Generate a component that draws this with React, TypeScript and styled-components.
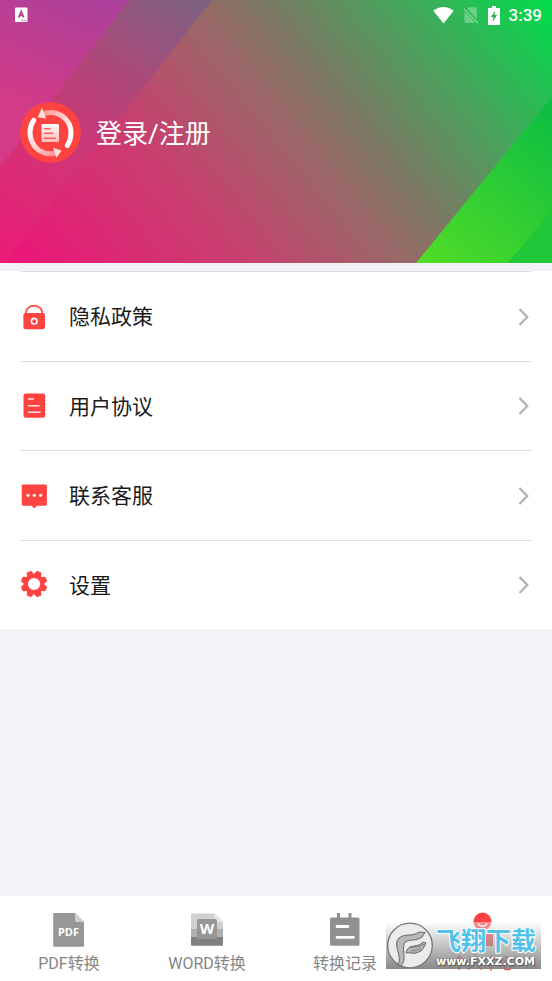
import React from "react";
import styled, { createGlobalStyle } from "styled-components";

const GlobalStyle = createGlobalStyle`
  * { box-sizing: border-box; }
  body {
    margin: 0;
    background: #f2f3f7;
    font-family: Roboto, "Noto Sans CJK SC", sans-serif;
    color: #1a1a1a;
  }
  button { border: 0; padding: 0; background: none; font: inherit; color: inherit; cursor: pointer; }
  svg { display: block; flex: none; }
`;

const Page = styled.div`
  position: relative;
  display: flex;
  flex-direction: column;
  min-height: 100vh;
`;

const Header = styled.header`
  position: relative;
  isolation: isolate;
  overflow: hidden;
  padding-bottom: 100px;
  color: #fff;
  background: linear-gradient(51deg, #ee1279 0%, #c8406f 32%, #9b6768 52%, #7b7863 62%, #48a45c 79%, #00dc4a 100%);
`;

const HeaderArt = styled.svg`
  position: absolute;
  inset: 0;
  z-index: -1;
  width: 100%;
  height: 100%;
`;

const StatusBar = styled.div`
  display: flex;
  align-items: center;
  justify-content: space-between;
  height: 30px;
  padding: 0 10px 0 14px;
`;

const StatusIcons = styled.div`
  display: flex;
  align-items: center;
  gap: 9px;
`;

const Clock = styled.time`
  font-size: 17px;
  line-height: 20px;
  font-weight: 500;
`;

const Profile = styled.button`
  display: flex;
  align-items: center;
  gap: 15px;
  margin: 72px 0 0 20px;
  font-size: 26px;
  line-height: 38px;
`;

const ProfileName = styled.span`
  padding-top: 2px;
`;

const Menu = styled.nav`
  display: grid;
  grid-auto-rows: 1fr;
  min-height: 358px;
  margin-top: 8px;
  padding: 0 20px;
  background: #fff;
`;

const MenuRow = styled.button`
  display: flex;
  align-items: center;
  gap: 21px;
  padding-top: 1px;
  border-top: 1px solid #dfdfe0;
  font-size: 21px;
  line-height: 30px;
  text-align: left;
`;

const MenuLabel = styled.span`
  flex: 1;
  padding-top: 1px;
`;

const TabBar = styled.nav`
  display: grid;
  grid-template-columns: repeat(4, 1fr);
  margin-top: auto;
  padding: 16px 0 5px;
  background: #fff;
`;

const Tab = styled.button<{ $active?: boolean }>`
  display: flex;
  flex-direction: column;
  align-items: center;
  gap: 4px;
  font-size: 16px;
  line-height: 24px;
  color: ${(p) => (p.$active ? "#fb4141" : "#858585")};
`;

const Watermark = styled.div`
  position: absolute;
  right: 11px;
  bottom: 12px;
  display: flex;
  align-items: center;
  gap: 2px;
  width: 155px;
  height: 47px;
  background: linear-gradient(rgba(255, 255, 255, 0.4), rgba(120, 120, 120, 0.88));
  pointer-events: none;
`;

const MarkText = styled.div`
  display: flex;
  flex-direction: column;
  align-items: flex-start;
  white-space: nowrap;
`;

const MarkName = styled.span`
  font: 700 25px/32px "Noto Sans CJK SC", sans-serif;
  color: #50c2ea;
  -webkit-text-stroke: 2px #fff;
  paint-order: stroke fill;
`;

const MarkUrl = styled.span`
  font: bold 11px/14px "DejaVu Sans", sans-serif;
  color: #fff;
  text-shadow: 1px 1px 1px #555, -1px 0 1px #666;
`;

const AppBadge = () => (
  <svg width="16" height="16" viewBox="0 0 16 16" aria-hidden="true">
    <rect x="1" y="0.5" width="12.5" height="14.5" rx="1" fill="#fff" />
    <path d="M4.7 10.5 7.2 4.5l2.5 6M5.500 8.500h3.400" fill="none" stroke="#b0408c" strokeWidth="1.7" />
    <path d="M7 13.300h5.500" stroke="#d193bb" />
  </svg>
);

const Wifi = () => (
  <svg width="21" height="18" viewBox="0 0 21 18" aria-hidden="true">
    <path d="M.3 4.800C6-.4 15-.4 20.700 4.800L10.500 17.500Z" fill="#fff" />
  </svg>
);

const NoSim = () => (
  <svg width="16" height="18" viewBox="0 0 16 18" aria-hidden="true">
    <path d="M5.500 1.200h7c.8 0 1.300.5 1.300 1.300v11L4.300 2.400ZM1.500 5.200l10.800 11.600H2.800c-.8 0-1.300-.5-1.300-1.300Z" fill="#fff" opacity=".32" />
    <path d="m.7 2.400 14 14.800" stroke="#fff" opacity=".45" strokeWidth="1.2" />
  </svg>
);

const Battery = () => (
  <svg width="12" height="19" viewBox="0 0 12 19" aria-hidden="true">
    <path d="M4 0h4v2h4v17H0V2h4Z" fill="#fff" />
    <path d="M7.200 5 2.800 11h2.600L4.500 16l4.700-7H6.600Z" fill="#2fae55" />
  </svg>
);

const Logo = () => (
  <svg width="61" height="61" viewBox="0 0 61 61" aria-hidden="true">
    <defs>
      <linearGradient id="arcRight" x1="0" y1="0" x2="1" y2="1">
        <stop offset="0" stopColor="#ff9a98" />
        <stop offset=".8" stopColor="#fff" />
      </linearGradient>
      <linearGradient id="arcLeft" x1="0" y1="0" x2="1" y2="1">
        <stop offset=".1" stopColor="#fff" />
        <stop offset="1" stopColor="#ff9a98" />
      </linearGradient>
      <linearGradient id="sheet" x1="0" y1="0" x2="0" y2="1">
        <stop offset="0" stopColor="#fff" />
        <stop offset="1" stopColor="#ffbab8" />
      </linearGradient>
    </defs>
    <circle cx="30.5" cy="30.5" r="30.3" fill="#ff4341" />
    <path d="M24.500 11.200C39 7.500 51 18 51 31c0 5-1.400 9-3.700 12.400" fill="none" stroke="url(#arcRight)" strokeWidth="5" strokeLinecap="round" />
    <path d="M13.700 18.400C4.500 31.500 13 54 34 51.500" fill="none" stroke="url(#arcLeft)" strokeWidth="5" strokeLinecap="round" />
    <path d="m22 6 4.300 10.500-8.800-1.300Z" fill="#ffe0df" />
    <path d="m33 45.500 8.500 3.200-5.200 7.300Z" fill="#ffe0df" />
    <rect x="21.5" y="22" width="17.5" height="18" rx="1" fill="url(#sheet)" />
    <path d="M24 26.700h6.500M24 31.300h9.500M24 36.200h12" stroke="#ff5a58" strokeWidth="1.5" />
  </svg>
);

const Lock = () => (
  <svg width="28" height="28" viewBox="0 0 28 28" aria-hidden="true">
    <path d="M6 12.500V9.800C6 5.500 9.500 2.800 14 2.800s8.200 2.700 8.200 7v2.700" fill="none" stroke="#ff5a58" strokeWidth="2" />
    <rect x="3.4" y="10" width="21.6" height="16.2" rx="2.2" fill="#ff4341" />
    <circle cx="14.2" cy="18.2" r="2.8" fill="none" stroke="#fff" strokeWidth="1.6" />
  </svg>
);

const Sheet = () => (
  <svg width="28" height="28" viewBox="0 0 28 28" aria-hidden="true">
    <rect x="3.5" y="1.5" width="21.7" height="24.2" rx="2.5" fill="#ff4341" />
    <path d="M8 7h6M8 13.700h11.500M8 20.300h12.500" stroke="#ffe4e3" strokeWidth="1.5" />
  </svg>
);

const Chat = () => (
  <svg width="28" height="28" viewBox="0 0 28 28" aria-hidden="true">
    <path d="M3.300 2.500h22c.9 0 1.600.7 1.600 1.600v18c0 .9-.7 1.600-1.600 1.600h-8.400L14.300 26.500l-2.600-2.800H3.300c-.9 0-1.600-.7-1.600-1.600v-18c0-.9.7-1.600 1.600-1.600Z" fill="#ff4341" />
    <g fill="#fff">
      <circle cx="8" cy="13.3" r="1.6" />
      <circle cx="14.3" cy="13.3" r="1.6" />
      <circle cx="20.6" cy="13.3" r="1.6" />
    </g>
  </svg>
);

const Gear = () => (
  <svg width="28" height="28" viewBox="-14 -13 28 28" aria-hidden="true">
    <g fill="#ff4341">
      {[22.5, 67.5, 112.5, 157.5, 202.5, 247.5, 292.5, 337.5].map((a) => (
        <path key={a} d="M-4-8-2.800-12.400Q-2.500-13.300-1.600-13.300H1.600Q2.500-13.300 2.800-12.400L4-8Z" transform={`rotate(${a})`} />
      ))}
    </g>
    <circle r="8.2" fill="none" stroke="#ff4341" strokeWidth="4.2" />
  </svg>
);

const Chevron = () => (
  <svg width="14" height="20" viewBox="0 0 14 20" aria-hidden="true">
    <path d="m1.500 2 7.800 8-7.800 8" fill="none" stroke="#b2b2b2" strokeWidth="2.3" />
  </svg>
);

const PdfIcon = () => (
  <svg width="36" height="36" viewBox="0 0 36 36" aria-hidden="true">
    <path d="M3.500 1H24l9 9v23.500c0 .8-.5 1.300-1.300 1.300H3.500c-.8 0-1.300-.5-1.300-1.300V2.300C2.200 1.500 2.700 1 3.500 1Z" fill="#979797" />
    <path d="m24 1 9 9h-7.500c-.9 0-1.500-.6-1.500-1.500Z" fill="#cfcfcf" />
    <text x="17.5" y="24" textAnchor="middle" fill="#fff" fontFamily="Open Sans" fontWeight="700" fontSize="11">PDF</text>
  </svg>
);

const WordIcon = () => (
  <svg width="36" height="36" viewBox="0 0 36 36" aria-hidden="true">
    <path d="M2 1.500h23.500l8.500 8.500v8H2Z" fill="#d0d0d0" />
    <path d="m25.500 1.500 8.500 8.500h-8.500Z" fill="#e7e7e7" />
    <path d="M2 17h32v8.500H2Z" fill="#b0b0b0" />
    <path d="M2 25h32v7.500c0 .8-.5 1.300-1.300 1.300H3.300c-.8 0-1.300-.5-1.300-1.300Z" fill="#808080" />
    <rect x="8" y="7" width="20" height="20" rx="1.5" fill="#969696" />
    <text x="18" y="22" textAnchor="middle" fill="#fff" fontFamily="Open Sans" fontWeight="700" fontSize="15">W</text>
  </svg>
);

const RecordIcon = () => (
  <svg width="36" height="36" viewBox="0 0 36 36" aria-hidden="true">
    <path d="M11.500 1v6M23 1v6" stroke="#909090" strokeWidth="3" />
    <rect x="3" y="5.5" width="29.5" height="28.3" rx="1.5" fill="#909090" />
    <path d="M10 14.500h11M10 25.300h16.500" stroke="#fff" strokeWidth="2.8" strokeLinecap="round" />
  </svg>
);

const PersonIcon = () => (
  <svg width="36" height="36" viewBox="0 0 36 36" aria-hidden="true">
    <circle cx="17.5" cy="9.5" r="9" fill="#fb4141" />
    <path d="M13 11.500c2 3.600 7 3.600 9 0" fill="none" stroke="#fff" strokeWidth="1.5" />
    <path d="M13 18.500h11q4 0 4 4V34H9V22.500q0-4 4-4Z" fill="#fb4141" />
  </svg>
);

const WatermarkLogo = () => (
  <svg width="48" height="47" viewBox="0 0 48 47" aria-hidden="true">
    <circle cx="24" cy="23.5" r="22.3" fill="#ececec" stroke="#777" strokeWidth="1.3" />
    <path d="M12 43C17 34 6 23 13 16c6-5 14-1 20-6l6 .5-3 4.500c-6 5-15 1-18 7-2 7 3 15-3 22Z" fill="#b8b8b8" stroke="#666" />
    <path d="M21 28c3-6 11-2 16-8l3 1-2 4-3 4-5 2c-4 1-7-1-10 0Z" fill="#b8b8b8" stroke="#666" />
    <path d="M24 26c4-2 9 0 14-4M25 29c4-1 6 0 10-3" fill="none" stroke="#666" strokeWidth=".8" />
  </svg>
);

const menuItems = [
  { label: "隐私政策", Icon: Lock },
  { label: "用户协议", Icon: Sheet },
  { label: "联系客服", Icon: Chat },
  { label: "设置", Icon: Gear },
];

const tabs = [
  { label: "PDF转换", Icon: PdfIcon },
  { label: "WORD转换", Icon: WordIcon },
  { label: "转换记录", Icon: RecordIcon },
  { label: "个人中心", Icon: PersonIcon, active: true },
];

export default function App() {
  return (
    <Page>
      <GlobalStyle />
      <Header>
        <HeaderArt viewBox="0 0 552 263" preserveAspectRatio="none" aria-hidden="true">
          <defs>
            <linearGradient id="violet" gradientUnits="userSpaceOnUse" x1="130" y1="0" x2="10" y2="263">
              <stop offset="0" stopColor="#a8409c" />
              <stop offset=".5" stopColor="#d43b86" />
              <stop offset="1" stopColor="#d43b86" />
            </linearGradient>
            <linearGradient id="dusk" gradientUnits="userSpaceOnUse" x1="200" y1="0" x2="10" y2="263">
              <stop offset="0" stopColor="#7b6280" />
              <stop offset=".38" stopColor="#b44478" />
              <stop offset=".65" stopColor="#d33376" />
              <stop offset="1" stopColor="#ea1c76" />
            </linearGradient>
            <linearGradient id="leaf" gradientUnits="userSpaceOnUse" x1="425" y1="263" x2="552" y2="110">
              <stop offset="0" stopColor="#50dc27" />
              <stop offset=".5" stopColor="#2fcd34" />
              <stop offset="1" stopColor="#0cbe42" />
            </linearGradient>
          </defs>
          <path d="M0 0H130L0 167Z" fill="url(#violet)" />
          <path d="M130 0H212L5 263H0V167Z" fill="url(#dusk)" />
          <path d="M552 97V263H416Z" fill="url(#leaf)" />
          <path d="M552 210V263H508Z" fill="#20c73a" />
        </HeaderArt>
        <StatusBar>
          <AppBadge />
          <StatusIcons>
            <Wifi />
            <NoSim />
            <Battery />
            <Clock>3:39</Clock>
          </StatusIcons>
        </StatusBar>
        <Profile type="button">
          <Logo />
          <ProfileName>登录/注册</ProfileName>
        </Profile>
      </Header>
      <Menu>
        {menuItems.map(({ label, Icon }) => (
          <MenuRow key={label} type="button">
            <Icon />
            <MenuLabel>{label}</MenuLabel>
            <Chevron />
          </MenuRow>
        ))}
      </Menu>
      <TabBar>
        {tabs.map(({ label, Icon, active }) => (
          <Tab key={label} type="button" $active={active} aria-current={active ? "page" : undefined}>
            <Icon />
            <span>{label}</span>
          </Tab>
        ))}
      </TabBar>
      <Watermark>
        <WatermarkLogo />
        <MarkText>
          <MarkName>飞翔下载</MarkName>
          <MarkUrl>www.FXXZ.COM</MarkUrl>
        </MarkText>
      </Watermark>
    </Page>
  );
}
